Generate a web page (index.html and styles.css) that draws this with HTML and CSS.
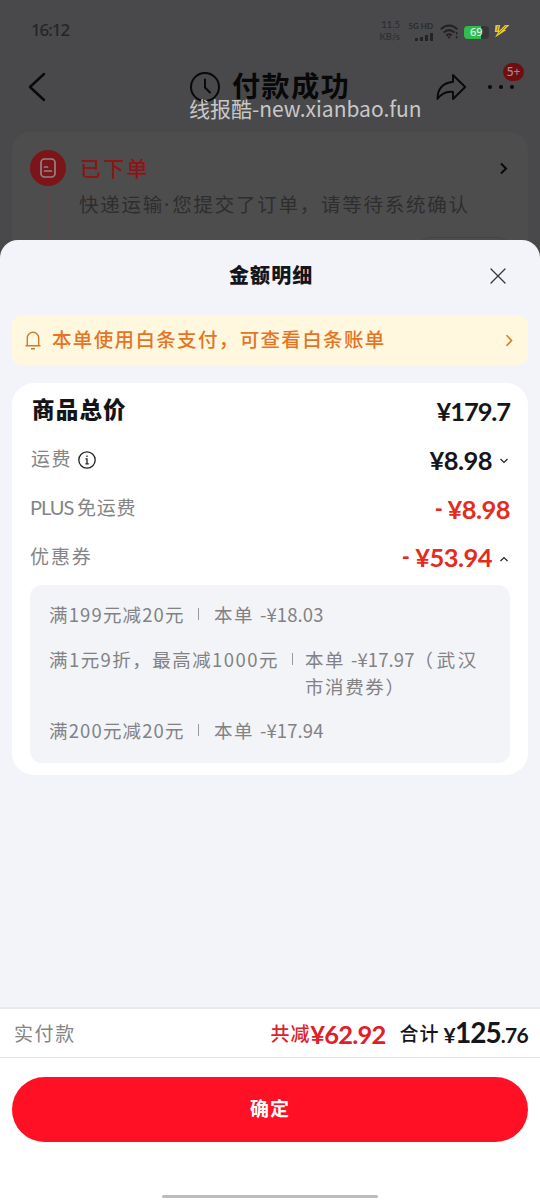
FILE: index.html
```html
<!DOCTYPE html>
<html lang="zh-CN">
<head>
<meta charset="utf-8">
<meta name="viewport" content="width=device-width, initial-scale=1">
<title>金额明细</title>
<link rel="stylesheet" href="styles.css">
</head>
<body>
<div class="screen">
  <div class="status">
    <span class="clock">16:12</span>
    <div class="speed"><span>11.5</span><span>KB/s</span></div>
    <div class="network">
      <span>5G HD</span>
      <svg width="18" height="9" viewBox="0 0 18 9"><path d="M0 5h3v3H0zM5 4h3v4H5zM10 2h3v6h-3zM15 0h3v8h-3z" fill="#242426"/></svg>
    </div>
    <svg class="wifi" width="19" height="16" viewBox="0 0 19 16" fill="none" stroke="#222224" stroke-width="2"><path d="M.8 5.2Q9 -2.2 17.4 5.2M3.6 8.5Q9 3.7 14.5 8.5M6.3 11.4Q9 9 11.8 11.4"/><path d="M7.2 12.5h3.6L9 15z" fill="#222224" stroke="none"/><path d="M16.6 8v2.6M16.6 12v2.6" stroke-width="1.5"/></svg>
    <div class="battery"><span>69</span></div>
    <svg class="bolt" width="16" height="15" viewBox="0 0 16 15"><path d="M1.500 1h4.700L5 7 11 1h4.500L10.500 6h2L1 13.500 4 8H.8z" fill="#e9c832"/><path d="M4.200 1.500 3 7M12.500 1.500 4.500 9.500" stroke="#555246" stroke-width=".6"/></svg>
  </div>

  <header class="nav">
    <svg class="back" width="18" height="30" viewBox="0 0 18 30"><path d="M16 2 2 15l14 13" fill="none" stroke="#09090a" stroke-width="2.4" stroke-linecap="round" stroke-linejoin="round"/></svg>
    <svg class="timer" width="30" height="30" viewBox="0 0 30 30" fill="none" stroke="#09090a" stroke-width="2"><circle cx="15" cy="15" r="14"/><path d="M15 7.500v8l5 5" stroke-linecap="round"/></svg>
    <h1>付款成功</h1>
    <svg class="share" width="31" height="28" viewBox="0 0 31 28"><path d="M17 2 29.200 14 17 26v-7.100Q7.500 17.500 1.500 26 1.500 10.500 17 8.700z" fill="none" stroke="#09090a" stroke-width="1.900" stroke-linejoin="round"/></svg>
    <div class="more"><i></i><i></i><i></i><b class="badge">5+</b></div>
    <div class="watermark">线报酷-new.xianbao.fun</div>
  </header>

  <section class="order">
    <div class="rail">
      <div class="order-icon"><svg width="16" height="20" viewBox="0 0 16 20" fill="none" stroke="#918587" stroke-width="1.700" stroke-linecap="round"><rect x="1" y="1" width="14" height="18" rx="3.500"/><path d="M4.500 9h3M4.500 13h7"/></svg></div>
      <div class="line"></div>
    </div>
    <div class="order-text"><h2>已下单</h2><p>快递运输<span class="dot">·</span>您提交了订单，请等待系统确认</p></div>
    <svg class="order-arrow" width="9" height="13" viewBox="0 0 9 13"><path d="m2 1.500 5 5-5 5" fill="none" stroke="#080808" stroke-width="2"/></svg>
    <div class="order-button"></div>
  </section>

  <main class="sheet">
    <div class="sheet-head">
      <h3>金额明细</h3>
      <svg class="close" width="16" height="16" viewBox="0 0 16 16"><path d="m1 1 14 14M15 1 1 15" stroke="#35363b" stroke-width="1.300" stroke-linecap="round"/></svg>
    </div>
    <div class="notice">
      <svg width="16" height="19" viewBox="0 0 16 19" fill="none" stroke="#c97b30" stroke-width="1.400"><path d="M.5 14.800h15M2.300 14.500V7a5.700 5.700 0 0 1 11.400 0v7.500M6 17.800h4"/></svg>
      <span>本单使用白条支付，可查看白条账单</span>
      <svg class="notice-arrow" width="8" height="13" viewBox="0 0 8 13"><path d="m1.500 1.200 5 5.300-5 5.300" fill="none" stroke="#d77c2d" stroke-width="1.600"/></svg>
    </div>
    <section class="card">
      <div class="row total"><span class="label">商品总价</span><strong class="money">¥179.7</strong></div>
      <div class="row shipping"><span class="label">运费</span>
        <svg class="info" width="18" height="18" viewBox="0 0 18 18"><circle cx="9" cy="9" r="8.200" fill="none" stroke="#222" stroke-width="1.300"/><path d="M7.500 7.800H9v5M7.400 12.900h3.400M9 4.500v1.500" fill="none" stroke="#222" stroke-width="1.300"/></svg>
        <strong class="money">¥8.98</strong><svg class="chev" width="8" height="6" viewBox="0 0 8 6"><path d="m.5 1 3.500 3.500L7.500 1" fill="none" stroke="#222" stroke-width="1.200"/></svg></div>
      <div class="row waived"><span class="label"><span class="latin">PLUS</span>免运费</span><strong class="money red"><i>-</i>¥8.98</strong></div>
      <div class="row coupon"><span class="label">优惠券</span><strong class="money red"><i>-</i>¥53.94</strong><svg class="chev" width="8" height="6" viewBox="0 0 8 6"><path d="M.5 5 4 1.500 7.500 5" fill="none" stroke="#222" stroke-width="1.200"/></svg></div>
      <div class="details">
        <div class="detail"><span class="rule rule-a">满199元减20元</span><span class="sep"></span><span class="amount">本单 <span class="sum">-¥18.03</span></span></div>
        <div class="detail"><span class="rule rule-b">满1元9折，最高减1000元</span><span class="sep"></span><span class="amount">本单 <span class="sum">-¥17.97</span>（<span class="city">武汉</span><br>市消费券）</span></div>
        <div class="detail"><span class="rule rule-a">满200元减20元</span><span class="sep"></span><span class="amount">本单 <span class="sum">-¥17.94</span></span></div>
      </div>
    </section>
    <footer>
      <div class="summary"><span class="paid">实付款</span><span class="saved">共减</span><strong class="saved-price">¥62.92</strong><span class="sum-label">合计</span><strong class="final"><small>¥</small>125<small>.76</small></strong></div>
      <div class="action"><button>确定</button></div>
      <div class="home"></div>
    </footer>
  </main>
</div>
</body>
</html>
```

FILE: styles.css
```css
* { box-sizing: border-box; }
body { margin: 0; background: #49494b; font-family: "Noto Sans CJK SC", "Noto Sans", sans-serif; color: #15161b; }
h1, h2, h3, p { margin: 0; }
i { font-style: normal; }
svg { display: block; flex: none; }
span, h1, h2, h3, p { white-space: nowrap; }
.screen { width: 540px; height: 1200px; overflow: hidden; display: flex; flex-direction: column; background: #49494b; }
.status { height: 60px; flex: none; padding: 0 31px; display: flex; align-items: center; }
.clock { width: 41px; font: 500 17px/20px "Noto Sans", sans-serif; color: #252527; letter-spacing: -1.100px; }
.speed { margin-left: auto; margin-right: 8px; margin-top: 2px; width: 20px; display: flex; flex-direction: column; align-items: flex-end; font: 9.500px/12px Lato, sans-serif; color: #29292b; }
.network { width: 25px; margin-right: 7px; margin-top: 3px; display: flex; flex-direction: column; align-items: flex-end; gap: 2px; font: 700 8px/9px Lato, sans-serif; color: #29292b; }
.wifi { margin: 4px 5px 0 0; }
.battery { width: 25px; height: 13px; margin-top: 5px; border-radius: 4px; background: linear-gradient(90deg, #31bd4b 70%, #363638 70%); color: #e1eee2; font: 500 11px/12px "Noto Sans", sans-serif; padding-left: 6px; }
.bolt { margin: 3px -1px 0 5px; }
.nav { position: relative; height: 72px; flex: none; display: flex; align-items: flex-start; padding: 12px 24px 0 28px; }
.back { margin: 0 144px 0 0; }
.timer { margin-right: 12px; }
h1 { width: 118px; font-size: 28px; line-height: 30px; letter-spacing: 1.600px; font-weight: 700; color: #080809; margin-top: -2px; }
.share { margin: 1px 0 0 86px; }
.more { position: relative; display: flex; gap: 7px; margin: 13px 0 0 21px; }
.more i { width: 4px; height: 4px; border-radius: 50%; background: #09090a; }
.badge { position: absolute; left: 15px; top: -22px; width: 21px; height: 18px; border-radius: 9px; background: #710d10; color: #a28788; font: 500 12px/17px "Noto Sans", sans-serif; text-align: center; }
.watermark { position: absolute; left: 189px; top: 35px; color: #c7c7c8; font-size: 21px; line-height: 26px; white-space: nowrap; }
.order { position: relative; height: 128px; margin: 0 12px -20px; flex: none; border-radius: 18px 18px 0 0; background: #4d4d4d; display: flex; padding: 18px 20px 0 18px; }
.rail { width: 36px; display: flex; flex-direction: column; align-items: center; }
.order-icon { width: 36px; height: 36px; flex: none; border-radius: 50%; background: #7b1519; display: grid; place-items: center; }
.line { width: 1px; flex: 1; margin-top: 6px; background: #654449; }
.order-text { flex: 1; padding-left: 14px; }
h2 { color: #8d1515; font-size: 21px; line-height: 28px; margin-top: 3px; letter-spacing: 2.300px; font-weight: 500; }
.order-text p { color: #2e2e2e; font-size: 19.500px; line-height: 26px; margin: 10px 0 0 -1px; letter-spacing: 1.750px; }
.dot { font-family: "Noto Sans", sans-serif; letter-spacing: 3px; }
.order-arrow { margin-top: 12px; }
.order-button { position: absolute; right: 16px; top: 105px; width: 96px; height: 28px; border: 1px solid #444; border-radius: 14px; }
.sheet { position: relative; flex: 1; background: #f3f4f9; border-radius: 18px 18px 0 0; display: flex; flex-direction: column; }
.sheet-head { height: 75px; flex: none; display: flex; padding: 21px 34px 0 229px; }
h3 { font-size: 20px; line-height: 28px; letter-spacing: 1.100px; font-weight: 800; margin-right: auto; }
.close { margin-top: 7px; }
.notice { margin: 0 12px; height: 50px; flex: none; background: #fff8df; border-radius: 10px; display: flex; align-items: center; padding: 0 15px 0 13px; color: #e67425; font-size: 19.500px; line-height: 28px; font-weight: 500; }
.notice span { letter-spacing: 1.350px; margin: -3px auto 0 11px; }
.card { margin: 18px 12px 0; height: 392px; flex: none; padding: 4px 18px 12px; background: #fff; border-radius: 22px; display: flex; flex-direction: column; }
.row { display: flex; align-items: center; }
.label { color: #858585; font-size: 19px; line-height: 28px; letter-spacing: 1.400px; }
.total { height: 48px; }
.total .label { color: #151515; font-size: 22.500px; font-weight: 800; margin: -7px 0 0 2px; letter-spacing: 1.200px; }
.total .money { letter-spacing: -1.100px; }
.shipping { height: 49px; }
.shipping .label { margin: -3px 0 0 1px; }
.info { margin-left: 6px; }
.waived { height: 50px; }
.waived .label { margin-top: -4px; display: flex; letter-spacing: .700px; }
.latin { width: 47px; font-family: Lato, sans-serif; font-size: 20px; letter-spacing: -1px; }
.coupon { height: 46px; }
.coupon .label { margin-top: -3px; letter-spacing: 1.900px; }
.money { margin-left: auto; font: 700 25.500px/30px Lato, sans-serif; white-space: nowrap; letter-spacing: -.550px; }
.red { color: #e52b1d; }
.red i { display: inline-block; margin-right: 5px; transform: translateY(-2px) scaleX(.85); }
.chev { margin: 3px 2px 0 8px; }
.details { margin-top: 5px; flex: 1; border-radius: 12px; background: #f3f4f8; padding: 16px 18px 0; color: #828284; font-size: 18.500px; line-height: 27px; }
.detail { display: flex; align-items: flex-start; }
.detail + .detail { margin-top: 18px; }
.detail:last-child { margin-top: 17px; }
.rule { margin-left: 1px; }
.rule-a { width: 136px; letter-spacing: 1.150px; }
.rule-b { width: 230px; letter-spacing: 1.450px; }
.sep { width: 1px; height: 12px; background: #99999b; margin: 7px 15px 0 13px; }
.rule-b + .sep { margin-right: 12px; }
.amount { white-space: nowrap; letter-spacing: 1.600px; }
.sum { letter-spacing: .100px; }
.city { margin-left: 2px; letter-spacing: 2.500px; }
footer { margin-top: auto; height: 193px; background: #fff; border-top: 2px solid #e8e9ec; display: flex; flex-direction: column; }
.summary { height: 49px; border-bottom: 1px solid #e5e5e7; display: flex; align-items: center; padding: 0 12px 0 14px; font-size: 19px; line-height: 28px; }
.paid { color: #858585; margin-right: auto; letter-spacing: 1.600px; }
.saved { color: #df2029; font-weight: 500; letter-spacing: .900px; }
.saved-price { font: 700 25.500px/30px Lato, sans-serif; color: #df2029; letter-spacing: -.800px; margin-top: 1px; }
.sum-label { margin-left: 14px; font-weight: 500; letter-spacing: 1px; }
.final { font: 700 28px/32px Lato, sans-serif; margin-left: 4px; letter-spacing: -1px; }
.final small { font-size: 21px; letter-spacing: -.700px; }
.action { padding: 19px 12px 0; }
button { display: block; width: 100%; height: 65px; border: 0; border-radius: 33px; background: #ff1024; color: #fff; font: 700 19px/28px "Noto Sans CJK SC", sans-serif; letter-spacing: 1px; padding: 0 0 3px; }
.home { width: 216px; height: 3px; background: #bcbcbc; border-radius: 2px; margin: auto auto 2px; }
```
